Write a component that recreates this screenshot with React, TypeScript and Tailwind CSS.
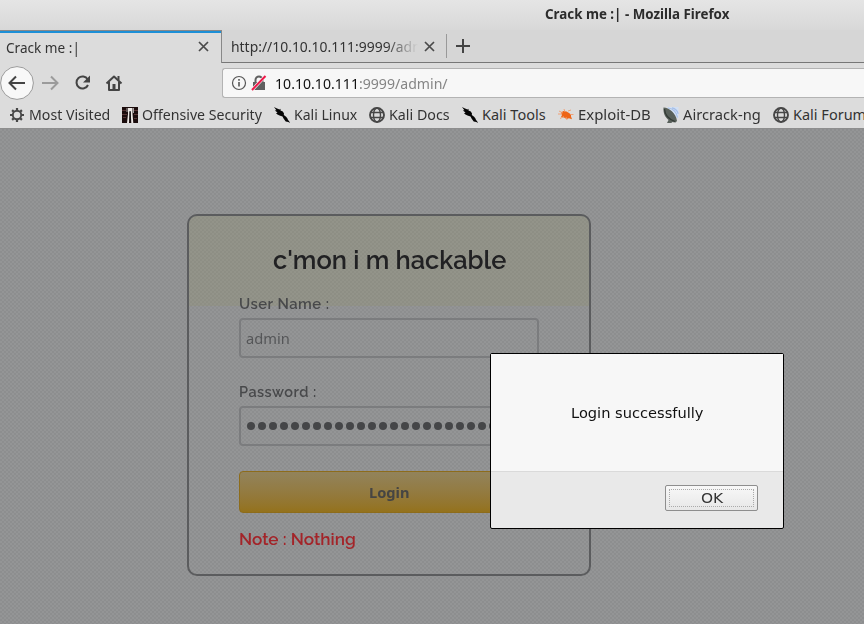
import React, { useLayoutEffect, useRef, useState } from 'react';

const UI = "font-['Noto_Sans',sans-serif]";

/* A single line of text condensed or stretched to an exact width. */
function Fit({ w, className = '', children }: { w: number; className?: string; children: React.ReactNode }) {
  const ref = useRef<HTMLSpanElement>(null);
  const [scale, setScale] = useState(1);
  useLayoutEffect(() => {
    if (ref.current) setScale(w / ref.current.offsetWidth);
  }, [w]);
  return (
    <span className={`block shrink-0 whitespace-nowrap ${className}`} style={{ width: w }}>
      <span ref={ref} className="inline-block origin-left" style={{ transform: `scaleX(${scale})` }}>
        {children}
      </span>
    </span>
  );
}

const Close = () => (
  <svg className="h-[11px] w-[11px] shrink-0" viewBox="0 0 11 11" stroke="#4a4a4a" strokeWidth="1.7" fill="none">
    <path d="M1 1l9 9M10 1l-9 9" />
  </svg>
);

const Gear = () => (
  <svg className="h-4 w-4 shrink-0" viewBox="0 0 16 16" fill="none" stroke="#474747">
    <circle cx="8" cy="8" r="4.2" strokeWidth="1.9" />
    <path strokeWidth="2.2" d="M8 1v2.5M8 12.5V15M1 8h2.5M12.5 8H15M3.1 3.1l1.7 1.7M11.2 11.2l1.7 1.7M12.9 3.1l-1.7 1.7M4.8 11.2l-1.7 1.7" />
  </svg>
);

const Offsec = () => (
  <svg className="h-4 w-4 shrink-0" viewBox="0 0 16 16">
    <path fill="#1b0c0c" d="M0 0h16v16H0z" />
    <path fill="#573535" d="M0 3h4v1H0zM0 7h5v1H0zM1 10h3v1H1zM12 3h4v1h-4zM12 7h4v1h-4zM12 11h3v1h-3z" />
    <path fill="#eee9e6" d="M6 1h4.500v6l.8 9H9.300L8.700 5h-1L7 16H5l1-9z" />
    <path fill="#111" d="M7.500 4h1.200v9l-.6 2-.6-2z" />
    <path fill="#a9a3a3" d="M4.500 1h1v4h-1zM11 1h1v5h-1z" />
  </svg>
);

const Kali = () => (
  <svg className="h-4 w-4 shrink-0" viewBox="0 0 16 16" fill="#050505">
    <path d="M0 0l2.500 1.300 3 1.200 1-.8v1.800l2.300 1 1.200 2-.2 1.500 2.300 1.800 1.500 2 .4 1.300 1 .8 1 2.100-1.700-1-2.600-.6-2-2.600-1.200-2.400-3-.8L3.500 7.500 2 6.200l1.500-.8L.8 3.500l1.600-.2z" />
  </svg>
);

const Globe = () => (
  <svg className="h-4 w-4 shrink-0" viewBox="0 0 16 16" fill="none" stroke="#474747">
    <circle cx="8" cy="8" r="7" strokeWidth="1.900" />
    <ellipse cx="8" cy="8" rx="3.500" ry="7" strokeWidth="1.400" />
    <path d="M1.500 5.500h13M1.500 10.500h13" strokeWidth="1.400" />
  </svg>
);

const Exploit = () => (
  <svg className="h-4 w-4 shrink-0" viewBox="0 0 16 16">
    <path fill="#ee6416" d="M3 5.500l2.500-1.500 3 .5L11 6l2 1.500v2l1 2.800-3-1L8.500 12 6 10.500 3 10l1-2z" />
    <path stroke="#ef9a6c" strokeWidth=".9" fill="none" d="M1 4l4 2M0 7h4M2 11.500l4-2M6 2l1 3M10 4l3-1M12 7.500h3.500M8 10l1 3" />
  </svg>
);

const Aircrack = () => (
  <svg className="h-4 w-4 shrink-0" viewBox="0 0 16 16">
    <path fill="#d3e0f3" d="M4 0h11.500v12z" />
    <path stroke="#a5bfe8" strokeWidth="1.200" fill="none" d="M5 1c5 .5 8.500 4 9.500 9.500M9 .8c3.500.8 5.500 3 6.200 6" />
    <path fill="#59615b" d="M.500.500C6 .500 13 6 14 14l-1.500 1.500-4-.5.500 1H4l1.500-3C2 10 0 6 .500.500z" />
    <path stroke="#333a35" strokeWidth="1.300" fill="none" d="M1.500 2c.2 5 4 10 10.500 12.500" />
  </svg>
);

const bookmarks = [
  { icon: <Gear />, label: 'Most Visited', w: 81 },
  { icon: <Offsec />, label: 'Offensive Security', w: 120 },
  { icon: <Kali />, label: 'Kali Linux', w: 63 },
  { icon: <Globe />, label: 'Kali Docs', w: 61 },
  { icon: <Kali />, label: 'Kali Tools', w: 64 },
  { icon: <Exploit />, label: 'Exploit-DB', w: 73 },
  { icon: <Aircrack />, label: 'Aircrack-ng', w: 78 },
  { icon: <Globe />, label: 'Kali Forums', w: 80 },
];

function Chrome() {
  return (
    <header className={`${UI} h-[129px] overflow-hidden border-b border-[#8e8e8e] bg-[#dcdcdc] text-[#333]`}>
      <div className="flex h-[30px] bg-linear-to-b from-[#e5e5e5] to-[#d8d8d8] pt-[3px] pl-[545px] text-sm leading-[21px] font-bold text-[#2c2c2c]">
        <Fit w={184}>Crack me :| - Mozilla Firefox</Fit>
      </div>
      <div className="flex h-[33px] bg-[#d6d6d6]">
        <div className="flex w-[222px] items-center border-t border-r border-[#888] bg-[#dcdcdc]">
          <div className="flex h-full w-full items-center border-t-2 border-[#1c8fd6] pb-[3px] pl-[6px]">
            <Fit w={74} className="text-[14.500px] leading-5">Crack me :|</Fit>
            <div className="ml-[118px]"><Close /></div>
          </div>
        </div>
        <div className="flex flex-1 items-center border-b border-[#777] pl-[9px]">
          <div className="w-[187px] overflow-hidden mask-r-from-[155px] mask-r-to-[187px]">
            <Fit w={212} className="text-[14.500px] leading-5">http://10.10.10.111:9999/admin/</Fit>
          </div>
          <div className="ml-[6px]"><Close /></div>
          <div className="ml-[11px] h-6 w-px bg-[#999]" />
          <svg className="ml-[9px] h-[14px] w-[14px]" viewBox="0 0 14 14" stroke="#444" strokeWidth="2">
            <path d="M7 0v14M0 7h14" />
          </svg>
        </div>
      </div>
      <div className="flex h-10 items-center">
        <svg className="h-[34px] w-[130px] shrink-0" viewBox="0 0 130 34" fill="none" stroke="#444" strokeWidth="2">
          <circle cx="17" cy="17" r="16.400" fill="#f8f8f8" stroke="#9b9b9b" strokeWidth="1" />
          <path d="M25 17H10M16 10.500L9.500 17l6.500 6.500" />
          <path stroke="#9b9b9b" d="M42 17h15M51 10.500l6.500 6.500-6.500 6.500" />
          <path d="M87.700 13.500A6 6 0 1 0 88 19" />
          <path fill="#444" stroke="none" d="M90 9.500v7h-7z" />
          <path strokeLinejoin="round" d="M106.500 17.500L114 10.500l7.500 7M109 16v8h10v-8" />
          <path strokeWidth="3" d="M114 18v6" />
          <path strokeWidth="2" d="M118.500 10v4" />
        </svg>
        <div className="ml-[92px] flex h-[30px] flex-1 items-center rounded-l-[3px] border border-r-0 border-[#b3b3b3] bg-[#f7f7f7] pl-[8px]">
          <svg className="h-4 w-[36px] shrink-0" viewBox="0 0 36 16" fill="none">
            <circle cx="8" cy="8" r="6.500" stroke="#555" strokeWidth="1.200" />
            <path d="M8 7v4.500M8 4v1.700" stroke="#555" strokeWidth="1.600" />
            <path d="M24.500 8V5a3.500 3.500 0 0 1 7 0v3" stroke="#606060" strokeWidth="2" />
            <path d="M22 7h12v8H22z" fill="#606060" />
            <path d="M21 15L34.500 1" stroke="#f7f7f7" strokeWidth="3.200" />
            <path d="M21 15L34.500 1" stroke="#ee1748" strokeWidth="2" />
          </svg>
          <Fit w={173} className="ml-[8px] text-[15px] leading-5 text-[#858585]">
            <span className="text-[#111]">10.10.10.111</span>:9999/admin/
          </Fit>
        </div>
      </div>
      <nav className="flex h-[25px] items-center gap-3 pb-px pl-[9px]">
        {bookmarks.map((b) => (
          <div key={b.label} className="flex shrink-0 items-center gap-1">
            {b.icon}
            <Fit w={b.w} className="pb-[2px] text-[14.500px] leading-5">{b.label}</Fit>
          </div>
        ))}
      </nav>
    </header>
  );
}

const field = 'flex h-10 items-center rounded-[4px] border-2 border-[#7b7c7e] pl-[5px]';

export default function App() {
  return (
    <div className="relative h-[624px] w-[864px] overflow-hidden bg-[#8f9193]">
      <Chrome />
      <main className="h-[495px] bg-[#949596] bg-[conic-gradient(#0000000c_25%,transparent_0_50%,#0000000c_0_75%,transparent_0)] bg-size-[4px_4px] pt-[85px] pl-[187px]">
        <section className="h-[362px] w-[404px] rounded-[10px] border-2 border-[#5b5c5e] bg-linear-to-b from-[#90906540] from-0% via-[#90906540] via-[90px] to-transparent to-[90px] px-[50px] font-['Raleway','Lato',sans-serif] text-[#48494b]">
          <h1 className="flex pt-[27px] pl-[34px] text-[26px] leading-[34px] font-semibold text-[#212123]">
            <Fit w={233}>c'mon i m hackable</Fit>
          </h1>
          <label className="mt-[17px] block text-[15px] leading-5 font-semibold tracking-[0.5px]">
            <Fit w={91}>User Name :</Fit>
          </label>
          <div className={`${field} mt-[4px] text-[#555658]`}>
            <Fit w={44} className={`${UI} text-[15px]`}>admin</Fit>
          </div>
          <label className="mt-[24px] block text-[15px] leading-5 font-semibold tracking-[0.5px]">
            <Fit w={78}>Password :</Fit>
          </label>
          <div className={`${field} mt-[4px] gap-[3px] overflow-hidden pl-[6px]`}>
            {Array.from({ length: 26 }, (_, i) => (
              <span key={i} className="h-2 w-2 shrink-0 rounded-full bg-[#454648]" />
            ))}
          </div>
          <button className="mt-[25px] flex h-[42px] w-full items-center rounded-[4px] border border-[#8d6c1b] bg-linear-to-b from-[#92835b] to-[#94721b] pl-[129px] text-[#464543]">
            <Fit w={40} className={`${UI} text-[15px] leading-5 font-bold`}>Login</Fit>
          </button>
          <p className="mt-[14px] text-[17px] leading-6 font-semibold text-[#a32429]">
            <Fit w={117}>Note : Nothing</Fit>
          </p>
        </section>
      </main>
      <div
        role="dialog"
        className="absolute top-[353px] left-[490px] h-[176px] w-[294px] rounded-[2px] border border-black bg-[#e9e9e9] font-['DejaVu_Sans',sans-serif] text-[13.300px]"
      >
        <div className="flex h-[118px] justify-center border-b border-[#dadada] bg-[#f7f7f7] pt-[50px] leading-5 text-[#111]">
          <Fit w={132}>Login successfully</Fit>
        </div>
        <div className="flex justify-end pt-[13px] pr-[25px]">
          <button className="h-[26px] w-[93px] rounded-[2px] border border-[#8e8e8e] bg-linear-to-b from-[#f8f8f8] to-[#e7e7e7] p-[3px] text-[#333]">
            <span className="flex h-full items-center justify-center border border-dotted border-[#aaa] pt-px pr-px">
              <Fit w={22}>OK</Fit>
            </span>
          </button>
        </div>
      </div>
    </div>
  );
}
